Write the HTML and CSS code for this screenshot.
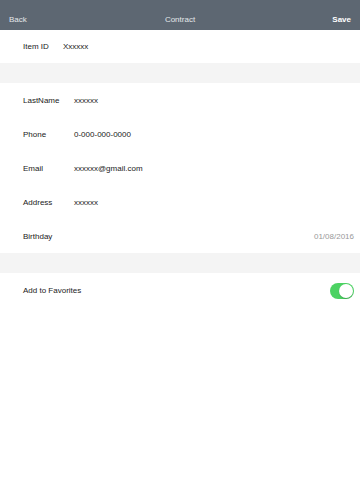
FILE: index.html
```html
<!DOCTYPE html>
<html>
<head>
<meta charset="utf-8">
<link rel="stylesheet" href="styles.css">
</head>
<body>
<div class="nav">
  <span class="nav-btn">Back</span>
  <span class="nav-title">Contract</span>
  <span class="nav-btn save">Save</span>
</div>
<div class="section">
  <div class="row id-row"><span class="label">Item ID</span><span class="value">Xxxxxx</span></div>
</div>
<div class="gap"></div>
<div class="section">
  <div class="row"><span class="label w">LastName</span><span class="value">xxxxxx</span></div>
  <div class="row"><span class="label w">Phone</span><span class="value">0-000-000-0000</span></div>
  <div class="row"><span class="label w">Email</span><span class="value">xxxxxx@gmail.com</span></div>
  <div class="row"><span class="label w">Address</span><span class="value">xxxxxx</span></div>
  <div class="row"><span class="label w">Birthday</span><span class="date">01/08/2016</span></div>
</div>
<div class="gap"></div>
<div class="section">
  <div class="row fav"><span class="label">Add to Favorites</span><span class="toggle"><span class="knob"></span></span></div>
</div>
</body>
</html>
```
FILE: styles.css
```css
html, body { margin: 0; padding: 0; background: #fff; }
body { font-family: "Liberation Sans", Arial, sans-serif; font-size: 8px; color: #222; width: 360px; }
.nav { height: 30px; background: #5d6772; display: flex; align-items: center; justify-content: space-between; padding: 8px 9px 0 9px; box-sizing: border-box; color: #e4e7ea; }
.nav-btn { width: 40px; }
.save { text-align: right; font-weight: bold; color: #fff; }
.nav-title { flex: 1; text-align: center; }
.section { background: #fff; }
.row { height: 34px; display: flex; align-items: center; padding: 0 6px 0 23px; }
.id-row { height: 33px; }
.label { color: #222; }
.id-row .label { width: 40px; }
.w { width: 51px; }
.value { color: #222; }
.date { margin-left: auto; color: #999; }
.gap { height: 20px; background: #f4f4f4; }
.fav { justify-content: space-between; }
.toggle { width: 24px; height: 16px; border-radius: 8px; background: #4cd263; position: relative; margin-top: 1px; }
.knob { position: absolute; right: 1px; top: 1px; width: 14px; height: 14px; border-radius: 50%; background: #fff; box-shadow: 0 1px 1px rgba(0,0,0,0.2); }
```
